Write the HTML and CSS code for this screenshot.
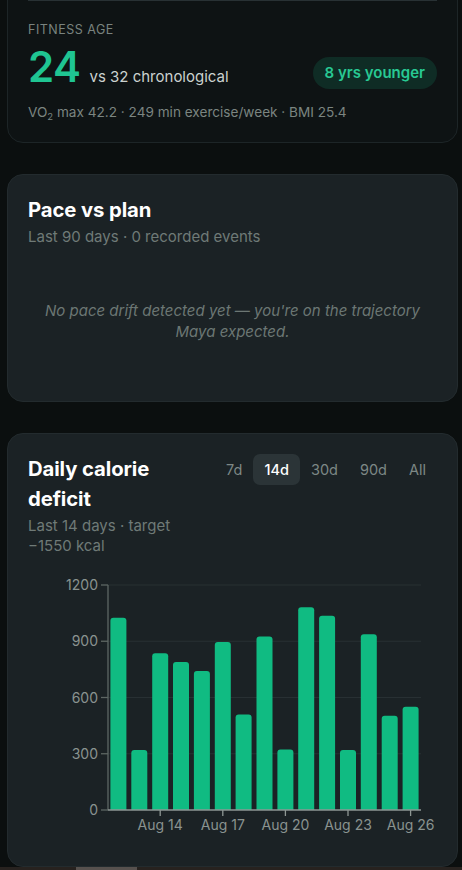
FILE: index.html
```html
<!DOCTYPE html>
<html lang="en">
<head>
<meta charset="utf-8">
<title>Fitness</title>
<link rel="stylesheet" href="styles.css">
</head>
<body>
<main class="page">
  <section class="card card-dark">
    <div class="fitness">
      <div class="eyebrow">FITNESS AGE</div>
      <div class="age-row">
        <div class="age-main">
          <span class="age-num">24</span>
          <span class="age-vs">vs 32 chronological</span>
        </div>
        <span class="pill">8 yrs younger</span>
      </div>
      <div class="meta">VO<span class="sub">2</span> max 42.2 · 249 min exercise/week · BMI 25.4</div>
    </div>
  </section>

  <section class="card">
    <h2 class="card-title">Pace vs plan</h2>
    <p class="card-sub">Last 90 days · 0 recorded events</p>
    <p class="empty">No pace drift detected yet — you're on the trajectory Maya expected.</p>
  </section>

  <section class="card card-chart">
    <div class="chart-head">
      <div class="head-text">
        <h2 class="card-title">Daily calorie deficit</h2>
        <p class="card-sub">Last 14 days · target −1550 kcal</p>
      </div>
      <div class="tabs">
        <span class="tab">7d</span>
        <span class="tab active">14d</span>
        <span class="tab">30d</span>
        <span class="tab">90d</span>
        <span class="tab">All</span>
      </div>
    </div>
    <svg class="chart" width="409" height="279" viewBox="0 0 409 279">
      <defs>
        <clipPath id="plot"><rect x="0" y="0" width="409" height="243"/></clipPath>
      </defs>
      <g class="grid">
        <line x1="80" y1="18" x2="393" y2="18"/>
        <line x1="80" y1="74.25" x2="393" y2="74.25"/>
        <line x1="80" y1="130.5" x2="393" y2="130.5"/>
        <line x1="80" y1="186.75" x2="393" y2="186.75"/>
      </g>
      <g class="bars" clip-path="url(#plot)">
        <rect x="82.4" y="50.8" width="16" height="196.2" rx="3"/>
        <rect x="103.3" y="183" width="16" height="64" rx="3"/>
        <rect x="124.2" y="86.3" width="16" height="160.7" rx="3"/>
        <rect x="145.0" y="95.1" width="16" height="151.9" rx="3"/>
        <rect x="165.9" y="104.1" width="16" height="142.9" rx="3"/>
        <rect x="186.8" y="75" width="16" height="172" rx="3"/>
        <rect x="207.6" y="147.4" width="16" height="99.6" rx="3"/>
        <rect x="228.5" y="69.4" width="16" height="177.6" rx="3"/>
        <rect x="249.4" y="182.6" width="16" height="64.4" rx="3"/>
        <rect x="270.2" y="40.3" width="16" height="206.7" rx="3"/>
        <rect x="291.1" y="48.8" width="16" height="198.2" rx="3"/>
        <rect x="312.0" y="183" width="16" height="64" rx="3"/>
        <rect x="332.8" y="67.3" width="16" height="179.7" rx="3"/>
        <rect x="353.7" y="148.7" width="16" height="98.3" rx="3"/>
        <rect x="374.6" y="139.7" width="16" height="107.3" rx="3"/>
      </g>
      <g class="axis">
        <line x1="80" y1="18" x2="80" y2="243"/>
        <line x1="73" y1="18" x2="80" y2="18"/>
        <line x1="73" y1="74.25" x2="80" y2="74.25"/>
        <line x1="73" y1="130.5" x2="80" y2="130.5"/>
        <line x1="73" y1="186.75" x2="80" y2="186.75"/>
        <line x1="73" y1="243" x2="80" y2="243"/>
      </g>
      <g class="axis-x">
        <line x1="80" y1="243" x2="393" y2="243"/>
        <line x1="132.2" y1="243" x2="132.2" y2="249"/>
        <line x1="194.8" y1="243" x2="194.8" y2="249"/>
        <line x1="257.4" y1="243" x2="257.4" y2="249"/>
        <line x1="320.0" y1="243" x2="320.0" y2="249"/>
        <line x1="382.6" y1="243" x2="382.6" y2="249"/>
      </g>
      <g class="ylabels">
        <text x="70" y="23">1200</text>
        <text x="70" y="79.2">900</text>
        <text x="70" y="135.5">600</text>
        <text x="70" y="191.7">300</text>
        <text x="70" y="248">0</text>
      </g>
      <g class="xlabels">
        <text x="132.2" y="263">Aug 14</text>
        <text x="194.8" y="263">Aug 17</text>
        <text x="257.4" y="263">Aug 20</text>
        <text x="320.0" y="263">Aug 23</text>
        <text x="382.6" y="263">Aug 26</text>
      </g>
    </svg>
  </section>
</main>
<div class="hscroll"><div class="hscroll-thumb"></div></div>
</body>
</html>
```

FILE: styles.css
```css
* { box-sizing: border-box; }

html, body {
  margin: 0;
  padding: 0;
  background: #0b0f0f;
  overflow: hidden;
}

body {
  font-family: Inter, "Noto Sans", "Liberation Sans", sans-serif;
  color: #e8edeb;
}

.page {
  display: flex;
  flex-direction: column;
  gap: 31px;
  padding: 0 4px 0 7px;
}

.card {
  background: #1b2225;
  border: 1px solid #232b2e;
  border-radius: 16px;
  padding: 20px 20px 20px;
}

.card-dark {
  background: #0e1314;
  border-color: #1d2527;
  margin-top: -17px;
  padding: 16px 20px 19px;
}

.fitness {
  border-top: 1px solid #283134;
  padding-top: 20px;
}

.eyebrow {
  font-size: 12.5px;
  line-height: 17px;
  letter-spacing: 0.5px;
  color: #79837f;
}

.age-row {
  margin-top: 5px;
  display: flex;
  justify-content: space-between;
  align-items: flex-end;
}

.age-main {
  display: flex;
  align-items: baseline;
  gap: 9px;
}

.age-num {
  font-size: 42px;
  line-height: 48px;
  font-weight: 600;
  color: #1fc592;
  letter-spacing: -0.5px;
}

.age-vs {
  font-size: 15px;
  color: #cbd2cf;
}

.pill {
  background: #0f2c25;
  color: #28c893;
  font-size: 15px;
  font-weight: 600;
  line-height: 32px;
  height: 32px;
  padding: 0 12px;
  border-radius: 16px;
  margin-bottom: 2px;
}

.meta {
  margin-top: 12px;
  font-size: 13.6px;
  line-height: 18px;
  color: #7b8581;
}

.sub {
  font-size: 9.5px;
  position: relative;
  top: 3px;
}

.card-title {
  margin: 0;
  font-size: 20.3px;
  line-height: 30px;
  font-weight: 700;
  color: #ffffff;
  letter-spacing: -0.1px;
}

.card-sub {
  margin: 2px 0 0;
  font-size: 15px;
  line-height: 20px;
  color: #6f7a77;
}

.empty {
  margin: 53px 0 0;
  padding: 0 6px 39px;
  text-align: center;
  font-style: italic;
  font-size: 15px;
  line-height: 21px;
  color: #6c7774;
}

.chart-head {
  display: flex;
  align-items: flex-start;
  gap: 14px;
}

.head-text {
  flex: 1;
  min-width: 0;
}

.tabs {
  flex: none;
  display: flex;
  gap: 0;
}

.tab {
  font-size: 14.5px;
  line-height: 19px;
  padding: 6px 11px;
  border-radius: 7px;
  color: #7d8885;
}

.tab.active {
  background: #2b3437;
  color: #ffffff;
  font-weight: 500;
}

.chart {
  display: block;
  margin-top: 11px;
  font-family: Inter, "Noto Sans", "Liberation Sans", sans-serif;
}

.grid line {
  stroke: #283033;
  stroke-width: 1;
}

.bars rect {
  fill: #10bb82;
}

.axis line {
  stroke: #5e6764;
  stroke-width: 1.3;
}

.axis-x line {
  stroke: #8e9794;
  stroke-width: 1.3;
}

.ylabels text {
  font-size: 14px;
  fill: #8a9390;
  text-anchor: end;
}

.xlabels text {
  font-size: 14px;
  fill: #8a9390;
  text-anchor: middle;
}

.hscroll {
  position: fixed;
  left: 0;
  right: 0;
  bottom: 0;
  height: 3px;
  background: #27221f;
}

.hscroll-thumb {
  position: absolute;
  left: 76px;
  top: 0;
  width: 61px;
  height: 3px;
  background: #57514e;
}
```
